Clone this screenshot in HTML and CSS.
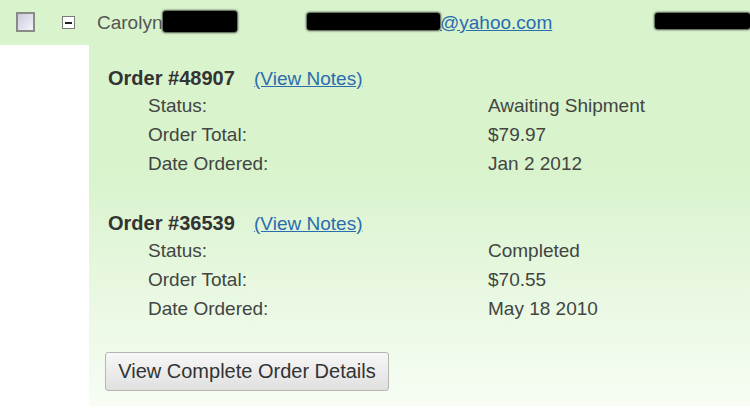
FILE: index.html
```html
<!DOCTYPE html>
<html lang="en">
<head>
    <meta charset="UTF-8">
    <title>Customer Orders</title>
    <link rel="stylesheet" href="styles.css">
</head>
<body>
    <div class="customer">
        <!-- customer row -->
        <div class="cust_row">
            <div class="cell_check"><span class="checkbox"></span></div>
            <div class="cell_toggle"><span class="toggle"></span></div>
            <div class="cell_name">Carolyn<span class="redact r_name"></span></div>
            <div class="cell_email"><a href="#"><span class="redact r_email"></span>@yahoo.com</a></div>
            <div class="cell_phone"><span class="redact r_phone"></span></div>
        </div>

        <!-- expanded order details -->
        <div class="cust_details">
            <div class="spacer"></div>
            <div class="panel">
                <div class="order">
                    <div class="order_head">
                        <span class="order_no">Order #48907</span>
                        <a href="#" class="notes">(View Notes)</a>
                    </div>
                    <dl class="order_info">
                        <dt>Status:</dt><dd>Awaiting Shipment</dd>
                        <dt>Order Total:</dt><dd>$79.97</dd>
                        <dt>Date Ordered:</dt><dd>Jan 2 2012</dd>
                    </dl>
                </div>
                <div class="order">
                    <div class="order_head">
                        <span class="order_no">Order #36539</span>
                        <a href="#" class="notes">(View Notes)</a>
                    </div>
                    <dl class="order_info">
                        <dt>Status:</dt><dd>Completed</dd>
                        <dt>Order Total:</dt><dd>$70.55</dd>
                        <dt>Date Ordered:</dt><dd>May 18 2010</dd>
                    </dl>
                </div>
                <button class="btn_details">View Complete Order Details</button>
            </div>
        </div>
    </div>
</body>
</html>
```

FILE: styles.css
```css
*{
    margin: 0;
    padding: 0;
}
body{
    background: #fff;
    font-family: "Liberation Sans", Arial, sans-serif;
    font-size: 19px;
    color: #424542;
}
a{
    color: #2b6cae;
}

/* customer row */
.cust_row{
    height: 45px;
    background: #d9f3cd;
    display: grid;
    grid-template-columns: 62px 35px 210px 348px 1fr;
    align-items: center;
}
.cell_check{
    padding-left: 16px;
    display: flex;
}
.checkbox{
    width: 15px;
    height: 16px;
    border: 2px solid #878c84;
    background: linear-gradient(135deg, #cbcbde, #f4f4fa);
    margin-top: -1px;
}
.toggle{
    display: block;
    width: 11px;
    height: 11px;
    border: 1px solid #7b7b7b;
    background: #fff;
    position: relative;
    margin-top: -1px;
}
.toggle::after{
    content: "";
    position: absolute;
    left: 2px;
    top: 5px;
    width: 7px;
    height: 2px;
    background: #222;
}
.cell_name{
    display: flex;
    align-items: center;
    color: #555;
}
.redact{
    display: inline-block;
    background: #000;
    border-radius: 3px;
    box-shadow: 0 0 2px 1px rgba(0,0,0,0.7);
}
.r_name{
    width: 74px;
    height: 21px;
    margin-left: 1px;
    margin-top: -3px;
}
.cell_email a{
    display: flex;
    align-items: center;
}
.r_email{
    width: 133px;
    height: 17px;
    margin-top: -2px;
}
.r_phone{
    width: 95px;
    height: 16px;
    margin-top: 1px;
}

/* order details */
.cust_details{
    display: flex;
}
.spacer{
    width: 89px;
    background: #fff;
}
.panel{
    flex: 1;
    padding: 20px 0 15px 19px;
    background: linear-gradient(#d9f3cd 0, #d9f3cd 35%, #f7fdf4 100%);
}
.order + .order{
    margin-top: 32px;
}
.order_head{
    height: 26px;
    line-height: 26px;
}
.order_no{
    font-size: 20px;
    font-weight: bold;
    color: #333;
}
.notes{
    margin-left: 14px;
}
.order_info{
    display: grid;
    grid-template-columns: 340px auto;
    line-height: 29px;
    padding-left: 40px;
}
.btn_details{
    margin: 29px 0 0 -3px;
    width: 284px;
    height: 39px;
    font-family: "Liberation Sans", Arial, sans-serif;
    font-size: 20px;
    color: #333;
    border: 1px solid #b4b6b2;
    border-radius: 3px;
    background: linear-gradient(#f7f7f7, #e0e0e0);
    cursor: pointer;
}
```
